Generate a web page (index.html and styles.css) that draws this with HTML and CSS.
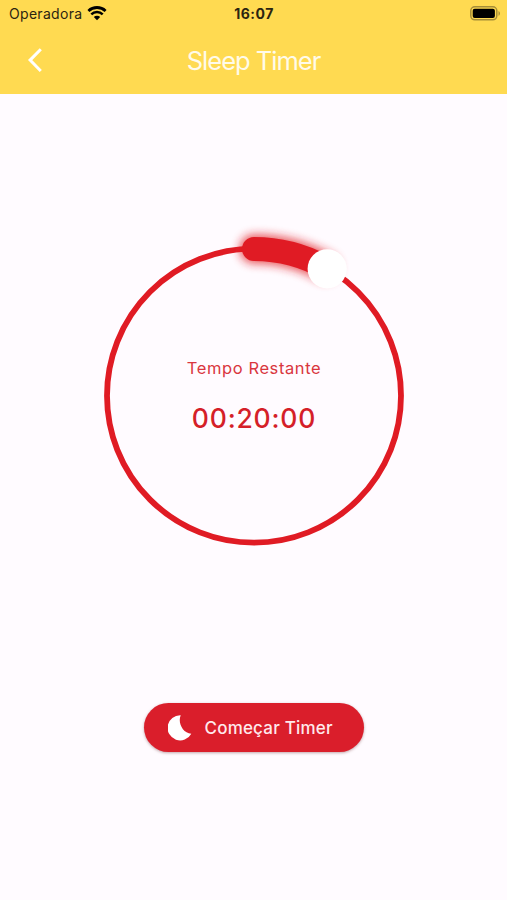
FILE: index.html
```html
<!DOCTYPE html>
<html lang="pt-BR">
<head>
    <meta charset="UTF-8">
    <meta name="viewport" content="width=device-width, initial-scale=1.0">
    <title>Sleep Timer</title>
    <link rel="stylesheet" href="styles.css">
</head>
<body>

    <header class="header">
        <div class="status-bar">
            <div class="carrier">
                <span class="carrier-name">Operadora</span>
                <svg class="wifi" width="20" height="15" viewBox="0 0 20 15">
                    <path d="M1.4 4.9a12.6 12.6 0 0 1 17.2 0" fill="none" stroke="#000" stroke-width="2.8"/>
                    <path d="M4.3 8.3a8.2 8.2 0 0 1 11.4 0" fill="none" stroke="#000" stroke-width="2.5"/>
                    <path d="M6.8 11a4.6 4.6 0 0 1 6.4 0L10 14.2z" fill="#000"/>
                </svg>
            </div>
            <span class="clock">16:07</span>
            <svg class="battery" width="31" height="15" viewBox="0 0 31 15">
                <rect x="0.8" y="0.8" width="26" height="13" rx="4" fill="none" stroke="#a58d38" stroke-width="1.5"/>
                <rect x="2.7" y="2.7" width="22.2" height="9.2" rx="2" fill="#000"/>
                <path d="M28.5 5v4.8c1.9-.7 1.9-4.1 0-4.8z" fill="#a58d38"/>
            </svg>
        </div>
        <nav class="nav-bar">
            <button class="back" type="button" aria-label="Voltar">
                <svg width="16" height="26" viewBox="0 0 16 26">
                    <path d="M13.8 1.2 3.1 12.1l10.7 10.9" fill="none" stroke="#fff" stroke-width="3"/>
                </svg>
            </button>
            <h1 class="title">Sleep Timer</h1>
        </nav>
    </header>

    <main class="content">
        <div class="timer">
            <svg class="dial" width="300" height="300" viewBox="0 0 300 300">
                <defs>
                    <filter id="glow" filterUnits="userSpaceOnUse" x="100" y="-50" width="180" height="130">
                        <feGaussianBlur stdDeviation="5"/>
                    </filter>
                </defs>
                <circle cx="150" cy="149.7" r="147" fill="none" stroke="#e01b24" stroke-width="5.8"/>
                <!-- elapsed arc with its glow -->
                <path class="arc arc-glow" d="M150 3A147 147 0 0 1 221 21.3" filter="url(#glow)"/>
                <path class="arc" d="M150 3A147 147 0 0 1 223.5 22.7"/>
                <circle cx="223.2" cy="22.8" r="19.6" fill="#fff"/>
            </svg>
            <div class="reading">
                <p class="label">Tempo Restante</p>
                <p class="time">00:20:00</p>
            </div>
        </div>

        <button class="start" type="button">
            <svg width="24" height="26" viewBox="0 0 24 26">
                <path d="M12.7.2C9.5 7.8 14.7 18.3 23.3 18.7A12.6 12.6 0 1 1 12.7.2z" fill="#fff"/>
            </svg>
            <span class="start-text">Começar Timer</span>
        </button>
    </main>

</body>
</html>
```
FILE: styles.css
```css
* {
    box-sizing: border-box;
}

body {
    margin: 0;
    min-height: 100vh;
    display: flex;
    flex-direction: column;
    background-color: #fffbff;
    font-family: Inter, "Liberation Sans", sans-serif;
}

h1, p {
    margin: 0;
}

button {
    border: 0;
    padding: 0;
    background: none;
    font-family: inherit;
}

.header {
    height: 94px;
    background-color: #ffda51;
}

/* Status bar */
.status-bar {
    display: grid;
    grid-template-columns: 1fr auto 1fr;
    align-items: center;
    height: 27px;
    padding: 0 6px 0 9px;
    color: #2b2410;
}

.carrier {
    display: flex;
    align-items: center;
    gap: 5px;
}

.carrier-name {
    font-size: 14px;
    letter-spacing: 0.3px;
}

.clock {
    margin-right: 2px;
    font-size: 14px;
    font-weight: 700;
    letter-spacing: 0.5px;
}

.battery {
    justify-self: end;
}

/* Title row */
.nav-bar {
    display: grid;
    grid-template-columns: 60px 1fr 60px;
    align-items: center;
    height: 67px;
}

.back {
    display: flex;
    padding-left: 27px;
}

.title {
    color: #fffbea;
    font-size: 25.5px;
    font-weight: 400;
    letter-spacing: -1px;
    text-align: center;
}

.content {
    display: flex;
    flex: 1;
    flex-direction: column;
    align-items: center;
    padding-top: 152px;
}

/* Dial and its reading share one grid cell */
.timer {
    display: grid;
    place-items: center;
    width: 300px;
    height: 300px;
    margin-left: 1px;
}

.dial,
.reading {
    grid-area: 1 / 1;
}

.dial {
    overflow: visible;
}

.arc {
    fill: none;
    stroke: #e01b24;
    stroke-width: 24;
    stroke-linecap: round;
}

.arc-glow {
    stroke-width: 29;
    opacity: 0.75;
}

.reading {
    display: flex;
    flex-direction: column;
    align-items: center;
    gap: 23px;
    text-align: center;
}

.label {
    color: #d9363e;
    font-size: 16.5px;
    line-height: 20px;
    letter-spacing: 0.6px;
}

.time {
    color: #d51f29;
    font-size: 26.5px;
    font-weight: 450;
    line-height: 34px;
    letter-spacing: 0.8px;
}

.start {
    display: flex;
    align-items: center;
    gap: 13px;
    width: 220px;
    height: 49px;
    margin-top: 157px;
    padding-left: 24px;
    border-radius: 25px;
    background-color: #da1e2b;
    box-shadow: 0 1px 3px rgba(80, 0, 10, 0.35);
}

.start-text {
    color: #ffe9ec;
    font-size: 17px;
    font-weight: 500;
    letter-spacing: 0.2px;
}
```
